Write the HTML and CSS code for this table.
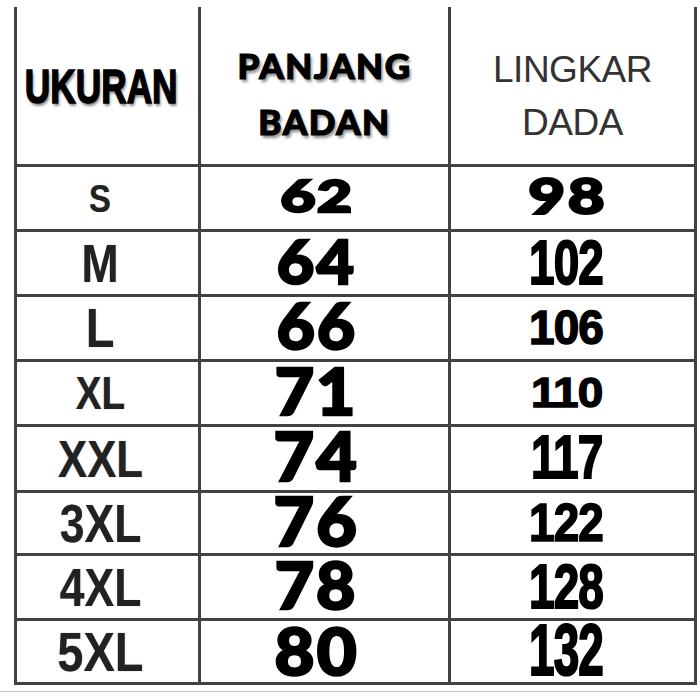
FILE: index.html
```html
<!DOCTYPE html>
<html>
<head>
<meta charset="utf-8">
<link rel="stylesheet" href="styles.css">
</head>
<body>
<div class="chart">
  <div class="cell head c1"><span class="ukuran">UKURAN</span></div>
  <div class="cell head c2"><span class="hb">PANJANG</span><span class="hb">BADAN</span></div>
  <div class="cell head c3"><span class="hl">LINGKAR</span><span class="hl">DADA</span></div>

  <div class="cell c1"><span class="sz s39">S</span></div>
  <div class="cell c2"><span class="pb p62s">62</span></div>
  <div class="cell c3"><span class="ld98">98</span></div>

  <div class="cell c1"><span class="sz s53">M</span></div>
  <div class="cell c2"><span class="pb p61">64</span></div>
  <div class="cell c3"><span class="ld y45">102</span></div>

  <div class="cell c1"><span class="sz s56">L</span></div>
  <div class="cell c2"><span class="pb p62">66</span></div>
  <div class="cell c3"><span class="ld y34">106</span></div>

  <div class="cell c1"><span class="sz s46">XL</span></div>
  <div class="cell c2"><span class="pb p64">71</span></div>
  <div class="cell c3"><span class="ld y30">110</span></div>

  <div class="cell c1"><span class="sz s52">XXL</span></div>
  <div class="cell c2"><span class="pb p66">74</span></div>
  <div class="cell c3"><span class="ld y43">117</span></div>

  <div class="cell c1"><span class="sz s53">3XL</span></div>
  <div class="cell c2"><span class="pb p66">76</span></div>
  <div class="cell c3"><span class="ld y38">122</span></div>

  <div class="cell c1"><span class="sz s53">4XL</span></div>
  <div class="cell c2"><span class="pb p64">78</span></div>
  <div class="cell c3"><span class="ld y45">128</span></div>

  <div class="cell c1"><span class="sz s56">5XL</span></div>
  <div class="cell c2"><span class="pb p65">80</span></div>
  <div class="cell c3"><span class="ld y51">132</span></div>
</div>
<div class="edge"></div>
</body>
</html>
```
FILE: styles.css
```css
html, body {
  margin: 0;
  padding: 0;
  background: #ffffff;
}
body {
  width: 700px;
  height: 700px;
  overflow: hidden;
  padding-top: 7px;
  box-sizing: border-box;
}
.chart {
  display: grid;
  grid-template-columns: 184px 250px 246px;
  grid-template-rows: 160px 65px 65px 65px 65px 66px 63px 65px 64px;
  margin-left: 14px;
  border-left: 3px solid #424242;
  width: max-content;
}
.cell {
  box-sizing: border-box;
  border-right: 3px solid #424242;
  border-bottom: 3px solid #424242;
  display: flex;
  align-items: center;
  justify-content: center;
}
.head {
  flex-direction: column;
}
.c1 { padding-right: 14px; }
.c2 { padding-right: 16px; }
.c3 { padding-right: 12px; }
.head.c1 { padding-right: 12px; padding-top: 0; }
.head.c2 { padding-right: 0; padding-top: 14px; }
.head.c3 { padding-right: 0; padding-left: 0; padding-top: 20px; }

.ukuran {
  font-family: "Liberation Sans", Arial, sans-serif;
  font-weight: 700;
  font-size: 49px;
  line-height: 40px;
  color: #000;
  display: block;
  transform: scaleX(0.72);
  -webkit-text-stroke: 1.6px #000;
  text-shadow: 2px 3px 3px rgba(0,0,0,0.45);
  white-space: nowrap;
}
.hb {
  font-family: "Lato", "DejaVu Sans", sans-serif;
  font-weight: 900;
  font-size: 35px;
  line-height: 56px;
  letter-spacing: 1.5px;
  color: #000;
  -webkit-text-stroke: 1.2px #000;
  text-shadow: 2px 3px 3px rgba(0,0,0,0.45);
}
.hl {
  font-family: "Liberation Sans", Arial, sans-serif;
  font-weight: 400;
  font-size: 37px;
  line-height: 53px;
  color: #333;
  letter-spacing: -0.5px;
}

.sz {
  font-family: "Liberation Sans", Arial, sans-serif;
  font-weight: 700;
  line-height: 1;
  color: #222;
  display: block;
  transform: scaleX(0.84);
  text-shadow: 0 0 1px rgba(0,0,0,0.5);
}
.s39 { font-size: 39px; }
.s46 { font-size: 46px; }
.s52 { font-size: 52px; }
.s53 { font-size: 53px; }
.s56 { font-size: 56px; }

.pb {
  font-family: "Lato", "DejaVu Sans", sans-serif;
  font-weight: 900;
  line-height: 0.8;
  color: #000;
  display: block;
  -webkit-text-stroke: 2.4px #000;
  letter-spacing: 2px;
  transform: scaleX(1.06);
  padding-bottom: 4px;
}
.p62s { font-size: 43px; transform: scaleX(1.4); letter-spacing: 1px; }
.p61 { font-size: 61px; }
.p62 { font-size: 62px; }
.p64 { font-size: 64px; }
.p65 { font-size: 65px; }
.p66 { font-size: 66px; }

.ld98 {
  font-family: "Lato", "DejaVu Sans", sans-serif;
  font-weight: 900;
  font-size: 49px;
  letter-spacing: 2px;
  line-height: 0.8;
  color: #000;
  display: block;
  -webkit-text-stroke: 2.2px #000;
  transform: scaleX(1.3);
  padding-bottom: 4px;
  padding-left: 2px;
}
.ld {
  font-family: "Liberation Sans", Arial, sans-serif;
  font-weight: 700;
  font-size: 51px;
  line-height: 0.8;
  color: #000;
  display: block;
  -webkit-text-stroke: 1.6px #000;
  letter-spacing: -1px;
}
.y30 { transform: scale(0.9, 0.84); }
.y34 { transform: scale(0.9, 0.95); }
.y38 { transform: scale(0.9, 1.05); }
.y43 { transform: scale(0.9, 1.18); }
.y45 { transform: scale(0.9, 1.24); }
.y51 { transform: scale(0.9, 1.4); }

.edge {
  height: 1px;
  margin-top: 6px;
  background: #c6c6c6;
}
```
